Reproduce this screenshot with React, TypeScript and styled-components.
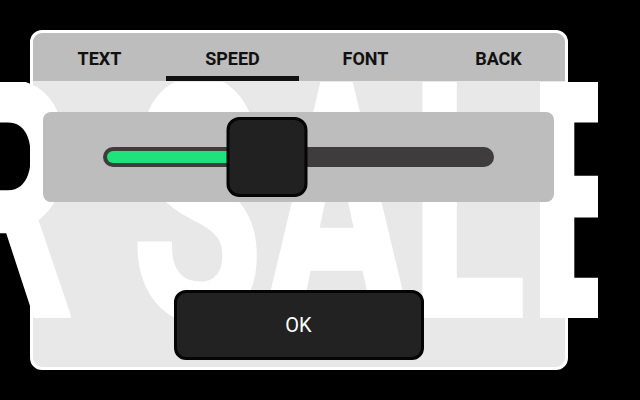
import React from "react";
import styled, { createGlobalStyle } from "styled-components";

const GlobalStyle = createGlobalStyle`
  html, body {
    margin: 0;
    padding: 0;
    background: #000;
    font-family: Roboto, "Noto Sans", Arial, sans-serif;
  }
`;

export const Stage = styled.div`
  position: relative;
  width: 640px;
  height: 400px;
  overflow: hidden;
  padding: 30px;
  box-sizing: border-box;
`;

// scrolling ticker text behind the settings dialog
export const Marquee = styled.div`
  position: absolute;
  left: 0;
  top: 82px;
  width: 598px;
  height: 236px;
  overflow: hidden;
`;

export const MarqueeText = styled.div`
  position: absolute;
  right: -52px;
  top: -43px;
  font-size: 332px;
  line-height: 1;
  font-weight: 700;
  color: #fff;
  -webkit-text-stroke: 5px #fff;
  letter-spacing: 4px;
  white-space: nowrap;
  transform: scaleX(0.64);
  transform-origin: right top;
`;

export const Dialog = styled.div`
  position: relative;
  z-index: 1;
  width: 538px;
  height: 340px;
  box-sizing: border-box;
  border: 3px solid #fff;
  border-radius: 12px;
  background: rgba(255, 255, 255, 0.91);
  overflow: hidden;
  display: flex;
  flex-direction: column;
`;

export const TabBar = styled.div`
  display: grid;
  grid-template-columns: repeat(4, 1fr);
  height: 48px;
  background: #bdbdbd;
`;

export const Tab = styled.div<{ $active?: boolean }>`
  position: relative;
  display: flex;
  align-items: center;
  justify-content: center;
  padding-top: 3px;
  font-size: 18px;
  font-weight: 700;
  color: #111;

  &::after {
    content: "";
    position: absolute;
    left: 0;
    right: 0;
    bottom: 0;
    height: 5px;
    background: ${(p) => (p.$active ? "#111" : "transparent")};
  }
`;

export const Body = styled.div`
  flex: 1;
  display: flex;
  flex-direction: column;
  align-items: center;
  padding: 31px 11px 7px 10px;
`;

export const SliderBox = styled.div`
  align-self: stretch;
  height: 90px;
  background: #bdbdbd;
  border-radius: 8px;
  display: flex;
  align-items: center;
  padding: 0 60px;
`;

export const Track = styled.div`
  position: relative;
  flex: 1;
  height: 20px;
  border-radius: 10px;
  background: #3e3c3c;
`;

export const Fill = styled.div`
  position: absolute;
  left: 4px;
  top: 4px;
  bottom: 4px;
  border-radius: 6px;
  background: #1fe27c;
`;

export const Thumb = styled.div`
  position: absolute;
  top: 50%;
  width: 81px;
  height: 80px;
  box-sizing: border-box;
  transform: translate(-50%, -50%);
  background: #212121;
  border: 3px solid #050505;
  border-radius: 13px;
`;

export const OkButton = styled.button`
  margin-top: auto;
  width: 250px;
  height: 70px;
  box-sizing: border-box;
  background: #222;
  border: 3px solid #050505;
  border-radius: 12px;
  color: #fff;
  font-family: Roboto, "Noto Sans", Arial, sans-serif;
  font-size: 20px;
  font-weight: 400;
`;

const tabs = ["TEXT", "SPEED", "FONT", "BACK"];

const App: React.FC = () => {
  const speed = 41.9;
  return (
    <>
      <GlobalStyle />
      <Stage>
        <Marquee>
          <MarqueeText>FOR SALE</MarqueeText>
        </Marquee>
        <Dialog>
          <TabBar>
            {tabs.map((t) => (
              <Tab key={t} $active={t === "SPEED"}>
                {t}
              </Tab>
            ))}
          </TabBar>
          <Body>
            <SliderBox>
              <Track>
                <Fill style={{ width: `calc(${speed}% - 4px)` }} />
                <Thumb style={{ left: `${speed}%` }} />
              </Track>
            </SliderBox>
            <OkButton>OK</OkButton>
          </Body>
        </Dialog>
      </Stage>
    </>
  );
};

export default App;
